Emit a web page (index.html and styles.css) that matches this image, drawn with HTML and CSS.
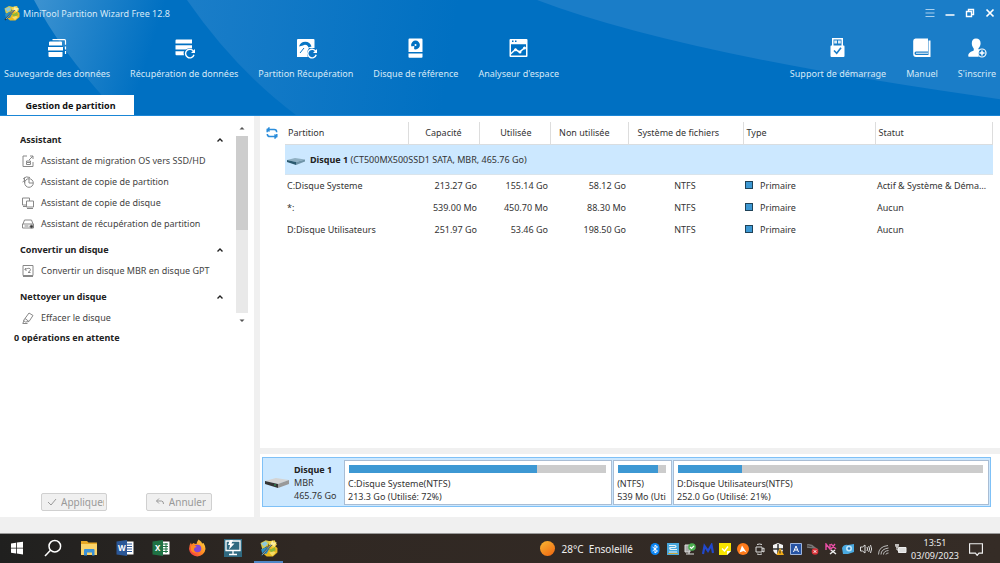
FILE: index.html
```html
<!DOCTYPE html>
<html lang="fr">
<head>
  <meta charset="utf-8">
  <title>MiniTool Partition Wizard Free 12.8</title>
  <link rel="stylesheet" href="styles.css">
</head>
<body>
  <svg class="defs" width="0" height="0" aria-hidden="true">
    <symbol id="logo" viewBox="0 0 16 16">
      <path d="M7 6l5-1 3.500 3v4l-4 3.500H6L3 13z" fill="#e9b820"/>
      <path d="M.5 3.500L5 1l4 1-2 4-5 3z" fill="#d8c84a"/>
      <path d="M1 4l4-2 2 2-3 3z" fill="#8cc9dc"/>
      <path d="M8 2l5-1 2 4-3 3-4-2z" fill="#f4d548"/>
      <path d="M1 9l5-2 2 2-2 4-4 0z" fill="#2d8fc4"/>
      <path d="M7 8l3 1 3-2 1 3-4 2z" fill="#8db73a"/>
      <path d="M8 12l4-1 2 1-3 3z" fill="#f7dc66"/>
      <path d="M1 15L12 3" stroke="#243b4a" stroke-width="1.6"/>
      <path d="M2 14L12 3" stroke="#d9e7ec" stroke-width=".6"/>
      <path d="M11 1l1 2 3 0-2 2 0 2-2-2-2 0 1-2z" fill="#fff0a0"/>
    </symbol>
    <symbol id="chevron" viewBox="0 0 8 8">
      <path d="M1.500 5.500L4 3l2.500 2.500" fill="none" stroke="#222" stroke-width="1.400"/>
    </symbol>
  </svg>

  <header class="header">
    <svg class="header-bg" viewBox="0 0 1000 116" preserveAspectRatio="none" aria-hidden="true">
      <defs>
        <linearGradient id="g1" gradientUnits="userSpaceOnUse" x1="40" y1="0" x2="155" y2="36">
          <stop offset="0" stop-color="#3a91d0"/>
          <stop offset="1" stop-color="#0070c2"/>
        </linearGradient>
        <linearGradient id="g2" gradientUnits="userSpaceOnUse" x1="190" y1="20" x2="450" y2="60">
          <stop offset="0" stop-color="#1a7dc8"/>
          <stop offset="1" stop-color="#0070c2"/>
        </linearGradient>
      </defs>
      <path d="M34 0Q60 50 108 103L115 116H296Q235 70 187 0z" fill="url(#g1)"/>
      <path d="M187 0Q235 70 296 116H537V0z" fill="url(#g2)"/>
      <path d="M537 0Q680 55 1000 100V0z" fill="#1a7dc8"/>
    </svg>

    <div class="titlebar">
      <svg class="logo"><use href="#logo"/></svg>
      <h1 class="title">MiniTool Partition Wizard Free 12.8</h1>
      <div class="window-buttons">
        <button class="window-button" aria-label="Menu">
          <svg viewBox="0 0 10 10"><path d="M.5 1.500h9M.5 5h9M.5 8.500h9" stroke="#a9d0ee"/></svg>
        </button>
        <button class="window-button" aria-label="Réduire">
          <svg viewBox="0 0 10 10"><path d="M.5 7h9" stroke="#fff" stroke-width="1.500"/></svg>
        </button>
        <button class="window-button" aria-label="Restaurer">
          <svg viewBox="0 0 10 10" fill="none" stroke="#fff" stroke-width="1.400"><path d="M1.500 3.500h5v5h-5zM3.500 3V1.500h5v5H7"/></svg>
        </button>
        <button class="window-button" aria-label="Fermer">
          <svg viewBox="0 0 10 10"><path d="M1.500 1.500l7 7m0-7l-7 7" stroke="#fff" stroke-width="1.700"/></svg>
        </button>
      </div>
    </div>

    <nav class="toolbar">
      <button class="tool">
        <svg viewBox="0 0 22 22" fill="#fff">
          <path d="M3 5.500q0-1 1-1h11q1 0 1 1V8.500H3zM2 10h15v3.500H2zM2.500 15H16.500V19q0 1-1 1H3.500q-1 0-1-1z"/>
          <path d="M6.500 2.700h12q1 0 1 1v4M19.500 9.500v3M19.500 14v3" fill="none" stroke="#fff" stroke-width="1.200"/>
        </svg>
        Sauvegarde des données
      </button>
      <button class="tool">
        <svg viewBox="0 0 22 22" fill="#fff">
          <path d="M2.500 3.500q0-1 1-1H19v4H2.500zM2.500 8.300H19v3.200q-3-1.500-6 1H2.500zM2.500 14.300H11q-1 2 0 4H3.500q-1 0-1-1z"/>
          <path d="M20.800 14.800a4.300 4.300 0 1 0 .2 3" fill="none" stroke="#fff" stroke-width="1.400"/>
          <path d="M22 12v4h-4z"/>
        </svg>
        Récupération de données
      </button>
      <button class="tool">
        <svg viewBox="0 0 22 22" fill="#fff">
          <path d="M2 3q0-1 1-1h15.500q1 0 1 1v17H2z"/>
          <path d="M4 9.500a6.500 6.500 0 0 1 12.500 0l-3 1A3.500 3.500 0 0 0 8 8.500z" fill="#0876c5"/>
          <circle cx="10.500" cy="9.500" r="1.500"/>
          <path d="M9 11l-4 5" stroke="#0876c5"/>
          <path d="M14 11h8v11h-8q-4-5 0-11z" fill="#0c74c4"/>
          <path d="M21 14.800a4.300 4.300 0 1 0 .2 3" fill="none" stroke="#fff" stroke-width="1.400"/>
          <path d="M22 12v4h-4z"/>
        </svg>
        Partition Récupération
      </button>
      <button class="tool">
        <svg viewBox="0 0 22 22" fill="#fff">
          <path d="M4.500 1.500h12q1 0 1 1V15h-14V2.500q0-1 1-1zM3.500 16.500h14V20q0 .7-1 .7h-12q-1 0-1-.7z"/>
          <circle cx="10.500" cy="8" r="4.400" fill="#0070c2"/>
          <path d="M5.500 9.500l3.800-.5-.3 4.500H5.500z"/>
          <circle cx="10.500" cy="8" r="1"/>
        </svg>
        Disque de référence
      </button>
      <button class="tool">
        <svg viewBox="0 0 22 22" fill="#fff">
          <path d="M2.500 2h16q1 0 1 1v16q0 1-1 1h-16q-1 0-1-1V3q0-1 1-1zM3 7.300v11.200h15V7.300z" fill-rule="evenodd"/>
          <path d="M4 4.300h1.500M7 4.300h1.500" stroke="#0070c2" stroke-width="1.500"/>
          <path d="M2.500 17l5-4.500 4 2.500 5.500-4.500" fill="none" stroke="#fff" stroke-width="1.500"/>
          <circle cx="7.500" cy="12.800" r="1.500"/><circle cx="12" cy="15" r="1.500"/><circle cx="16.500" cy="11" r="1.500"/>
        </svg>
        Analyseur d'espace
      </button>
      <button class="tool tool-right">
        <svg viewBox="0 0 22 22" fill="#fff">
          <path d="M5 1h11v7.500h.8q.7 0 .7 1V19q0 1-1 1H4.500q-1 0-1-1V9.500q0-1 .7-1H5zM6.500 2.500v6h8v-6z" fill-rule="evenodd"/>
          <path d="M7.200 3.500H10v3H7.200zM11 3.500h2.800v3H11z" opacity=".85"/>
          <path d="M7 13.500l2.700 2.800 4.300-5.500" fill="none" stroke="#1a7dc8" stroke-width="1.600"/>
        </svg>
        Support de démarrage
      </button>
      <button class="tool">
        <svg viewBox="0 0 22 22" fill="#fff">
          <path d="M4.500 1.500H17V14.500H5q-1.500 0-1.500 1.700T5 18h12.500V3.500h2V20H5q-2.800 0-2.800-3V4q0-2.500 2.300-2.500z"/>
          <path d="M5 15.700h12v1H5z"/>
        </svg>
        Manuel
      </button>
      <button class="tool">
        <svg viewBox="0 0 22 22" fill="#fff">
          <path d="M10 1.500c3 0 4.600 2 4.600 4.800 0 2.400-1.100 4-2.200 5 .1 1 .5 1.700 1.400 2.100-2 1.400-2.200 4-1 6.300H2.500c-.9-3 1-4.600 5-6 .4-.6.4-1.400.2-2.300C6.500 10 5.800 8.500 5.800 6.300 5.800 3.500 7.300 1.500 10 1.500z"/>
          <circle cx="16" cy="16" r="4" fill="none" stroke="#fff" stroke-width="1.200"/>
          <path d="M16 13.500v5M13.500 16h5" stroke="#fff" stroke-width="1.500"/>
        </svg>
        S'inscrire
      </button>
    </nav>

    <div class="tabs">
      <button class="tab">Gestion de partition</button>
    </div>
  </header>

  <main class="content">
    <aside class="sidebar">
      <div class="menu">
        <div class="menu-list">
          <section class="group">
            <h2 class="group-title">Assistant <svg class="chevron"><use href="#chevron"/></svg></h2>
            <a class="item" href="#">
              <svg viewBox="0 0 12 12"><path d="M5 1H1v10.500h10V7M8 1h3v3M11 1L7 5M4.500 7.500h4v2h-4zM4.500 7.500V6h4v1.500"/></svg>
              Assistant de migration OS vers SSD/HD
            </a>
            <a class="item" href="#">
              <svg viewBox="0 0 12 12"><circle cx="7" cy="7" r="4.300"/><path d="M7 3v4h4M2.500 7V1.500M2.500 4.500L.5 6M1 3q3-3.500 7-1.500"/></svg>
              Assistant de copie de partition
            </a>
            <a class="item" href="#">
              <svg viewBox="0 0 12 12"><path d="M4 8H.500V1h7v3M4.500 4h7v6h-7zM5 11.500h6M1 9.500h3"/></svg>
              Assistant de copie de disque
            </a>
            <a class="item" href="#">
              <svg viewBox="0 0 12 12"><path d="M1 6l1.500-4h7L11 6M.500 6h11v4H.500zM2.500 8h4"/><circle cx="9.500" cy="8.500" r="1.600" fill="#333"/></svg>
              Assistant de récupération de partition
            </a>
          </section>
          <section class="group">
            <h2 class="group-title">Convertir un disque <svg class="chevron"><use href="#chevron"/></svg></h2>
            <a class="item" href="#">
              <svg viewBox="0 0 12 12"><path d="M1 .500h10v10H1zM1 11.500h10M4 3L2.700 4.500 4.500 5.500M3 4.500q5-2.500 5.500 0 0 1.500-2.500 3h2.500"/></svg>
              Convertir un disque MBR en disque GPT
            </a>
          </section>
          <section class="group">
            <h2 class="group-title">Nettoyer un disque <svg class="chevron"><use href="#chevron"/></svg></h2>
            <a class="item" href="#">
              <svg viewBox="0 0 12 12"><path d="M7 1l4 2.500-4 6-3.500.5L1.500 8.500zM3 6.500l4 3M.500 11.500h5M2 8.500l-1 2.500"/></svg>
              Effacer le disque
            </a>
          </section>
        </div>
        <div class="scrollbar" aria-hidden="true">
          <svg viewBox="0 0 8 8"><path d="M1.500 5.500L4 3l2.500 2.500z"/></svg>
          <div class="scroll-track"><div class="scroll-thumb"></div></div>
          <svg viewBox="0 0 8 8"><path d="M1.500 2.500L4 5l2.500-2.500z"/></svg>
        </div>
      </div>
      <p class="pending">0 opérations en attente</p>
      <div class="actions">
        <button class="action" disabled>
          <svg viewBox="0 0 10 10"><path d="M1 5l3 3 5-6"/></svg>
          <span>Appliquer</span>
        </button>
        <button class="action" disabled>
          <svg viewBox="0 0 10 10"><path d="M4 1.500L1.500 4 4 6.500M1.500 4h5q2 0 2 3"/></svg>
          <span>Annuler</span>
        </button>
      </div>
    </aside>

    <div class="panel">
      <div class="partitions">
        <button class="refresh" aria-label="Actualiser">
          <svg viewBox="0 0 12 12" fill="none" stroke="#2b8ddb" stroke-width="1.500"><path d="M1.200 5.200V2.500h7q2.500 0 2.500 2.700M10.800 7v2.500h-7Q1.300 9.500 1.300 7M3.500.500l-2 2 2 2M8.500 7.500l2 2-2 2"/></svg>
        </button>
        <table class="table">
          <colgroup>
            <col class="col-name"><col class="col-size"><col class="col-size"><col class="col-free"><col class="col-fs"><col class="col-type"><col>
          </colgroup>
          <thead>
            <tr>
              <th>Partition</th>
              <th class="center">Capacité</th>
              <th class="right">Utilisée</th>
              <th class="right">Non utilisée</th>
              <th>Système de fichiers</th>
              <th>Type</th>
              <th>Statut</th>
            </tr>
          </thead>
          <tbody>
            <tr class="disk-row">
              <td colspan="7">
                <svg class="disk-icon" viewBox="0 0 18 8"><path d="M0 3l8-2 10 1.500L9 5z" fill="#8fb0c3"/><path d="M0 3l9 2v3L0 5z" fill="#2b5a70"/><path d="M9 5l9-2.500v2L9 8z" fill="#7095a9"/></svg><b>Disque 1</b> (CT500MX500SSD1 SATA, MBR, 465.76 Go)
              </td>
            </tr>
            <tr>
              <td>C:Disque Systeme</td>
              <td class="right">213.27 Go</td>
              <td class="right">155.14 Go</td>
              <td class="right">58.12 Go</td>
              <td class="center">NTFS</td>
              <td class="type">Primaire</td>
              <td>Actif &amp; Système &amp; Démarrage</td>
            </tr>
            <tr>
              <td>*:</td>
              <td class="right">539.00 Mo</td>
              <td class="right">450.70 Mo</td>
              <td class="right">88.30 Mo</td>
              <td class="center">NTFS</td>
              <td class="type">Primaire</td>
              <td>Aucun</td>
            </tr>
            <tr>
              <td>D:Disque Utilisateurs</td>
              <td class="right">251.97 Go</td>
              <td class="right">53.46 Go</td>
              <td class="right">198.50 Go</td>
              <td class="center">NTFS</td>
              <td class="type">Primaire</td>
              <td>Aucun</td>
            </tr>
          </tbody>
        </table>
      </div>

      <div class="map-area">
        <div class="map">
          <div class="map-disk">
            <svg viewBox="0 0 24 10"><path d="M0 3l11-3 13 2-11 4z" fill="#d4d4d4"/><path d="M0 3l13 3v4L0 6z" fill="#353535"/><path d="M13 6l11-4v4l-11 4z" fill="#999"/><path d="M9 7h2" stroke="#2fa35a"/></svg>
            <div><b>Disque 1</b><br>MBR<br>465.76 Go</div>
          </div>
          <div class="part part-c">
            <div class="bar"><div class="bar-used" style="width: 73%"></div></div>
            C:Disque Systeme(NTFS)<br>213.3 Go (Utilisé: 72%)
          </div>
          <div class="part part-small">
            <div class="bar"><div class="bar-used" style="width: 84%"></div></div>
            (NTFS)<br>539 Mo (Uti
          </div>
          <div class="part part-d">
            <div class="bar"><div class="bar-used" style="width: 21%"></div></div>
            D:Disque Utilisateurs(NTFS)<br>252.0 Go (Utilisé: 21%)
          </div>
        </div>
      </div>
    </div>
  </main>

  <div class="statusbar"></div>

  <footer class="taskbar">
    <div class="apps">
      <button class="app" aria-label="Démarrer">
        <svg viewBox="0 0 18 18" fill="#fff"><path d="M3 4.500l5-.8v5H3zM8.800 3.600L15 2.700v6H8.800zM3 9.500h5v5l-5-.8zM8.800 9.500H15v6l-6.200-.9z"/></svg>
      </button>
      <button class="app" aria-label="Rechercher">
        <svg viewBox="0 0 18 18" fill="none" stroke="#fff" stroke-width="1.500"><circle cx="10.800" cy="7.200" r="5.800"/><path d="M6.500 11.300L1 17"/></svg>
      </button>
      <button class="app" aria-label="Explorateur de fichiers">
        <svg viewBox="0 0 18 18"><path d="M1 2h6l1.500 1.500H17V16H1z" fill="#e8a825"/><path d="M1 5h16v11H1z" fill="#fbd46a"/><path d="M4 16.500V11q0-1 1-1h8.500q1 0 1 1v5.500H12v-3H7v3z" fill="#3b91d8"/></svg>
      </button>
      <button class="app" aria-label="Word">
        <svg viewBox="0 0 18 18"><path d="M9 2.500h8.500v13H9z" fill="#fff"/><path d="M11 5h5M11 7.500h5M11 10h5M11 12.500h5" stroke="#2b5797"/><path d="M.500 2.500L11 1v16L.500 15.500z" fill="#2b5797"/><text class="glyph" x="2" y="12">W</text></svg>
      </button>
      <button class="app" aria-label="Excel">
        <svg viewBox="0 0 18 18"><path d="M9 2.500h8.500v13H9z" fill="#fff"/><path d="M11 5h5M11 7.500h5M11 10h5M11 12.500h5M14 4v10" stroke="#1f7244"/><path d="M.500 2.500L11 1v16L.500 15.500z" fill="#1f7244"/><text class="glyph" x="3" y="12">X</text></svg>
      </button>
      <button class="app" aria-label="Firefox">
        <svg viewBox="0 0 18 18"><defs><linearGradient id="ff" x1="1" y1="0" x2="0" y2="1"><stop offset="0" stop-color="#ffe047"/><stop offset=".5" stop-color="#ff8a22"/><stop offset="1" stop-color="#f0264f"/></linearGradient></defs><path d="M10.500.5q3 2 3.500 4l1.500-.5q2 3 2 6a8.300 8.300 0 0 1-16.500 0Q1 6 3 3.500l.5 2L5.500 4q1 1 3 1 .5-2.500 2-4.500z" fill="url(#ff)"/><circle cx="9.500" cy="9.500" r="3.800" fill="#8147d8"/><path d="M3 7q4-1 6 1-3 0-3 2.500T9 13.500q-4 1-6-2z" fill="#ff8a22"/></svg>
      </button>
      <button class="app" aria-label="Bureau à distance">
        <svg viewBox="0 0 18 18"><path d="M0 0h18v18H0z" fill="#2f6980"/><path d="M2 2h14v9.500H2zM9 11.500V15M5 15.500h8" fill="none" stroke="#fff" stroke-width="1.300"/><path d="M6 1h3L7.500 4.500h3L5 10.500l1-4.500H4z" fill="#fff"/></svg>
      </button>
      <button class="app app-active" aria-label="MiniTool Partition Wizard">
        <svg><use href="#logo"/></svg>
      </button>
    </div>

    <div class="weather"><span class="sun"></span>28°C&nbsp; Ensoleillé</div>

    <div class="tray">
      <svg viewBox="0 0 12 12"><rect x="1.500" width="9" height="12" rx="4.500" fill="#0a84f2"/><path d="M3.500 4l5 4L6 10V2l2.500 2-5 4" fill="none" stroke="#fff"/></svg>
      <svg viewBox="0 0 12 12"><path d="M0 0h12v12H0z" fill="#49a7dc"/><path d="M2 2.500h6q2 1 0 2H3q-1 2 2 2h5M2 9h8" fill="none" stroke="#e6f4fb" stroke-width="1.200"/><path d="M1 10.500h10" stroke="#c7a63a"/></svg>
      <svg viewBox="0 0 12 12"><path d="M1 2h5v7H1zM2 11h8M5 9v2" fill="#aaa" stroke="#ddd"/><circle cx="8" cy="4" r="3.800" fill="#4caf50"/><path d="M6 4l1.500 1.500L10 3" fill="none" stroke="#fff" stroke-width="1.200"/></svg>
      <svg viewBox="0 0 12 12"><path d="M1 11L2.500 3 6 8l3.500-6L11 10" fill="none" stroke="#2148cc" stroke-width="2.200"/></svg>
      <svg viewBox="0 0 12 12"><path d="M0 0h12v8l-4 4H0z" fill="#f6e400"/><path d="M8 12V8h4z" fill="#fff"/><path d="M3 5.500l2.500 2.500L9 3.500" fill="none" stroke="#fff" stroke-width="1.300"/></svg>
      <svg viewBox="0 0 12 12"><circle cx="6" cy="6" r="6" fill="#ff7a1a"/><path d="M2.500 9.500L5 2.500l4.500 7-3-1.500z" fill="#fff"/></svg>
      <svg viewBox="0 0 12 12" fill="none" stroke="#ddd"><path d="M2 4h6v5H2zM8 6l2-1v4L8 8M3 1.500q2.500-1 5 0M3 11q2.500 1 5 0"/></svg>
      <svg viewBox="0 0 12 12"><path d="M6 0l5 2v4q0 4-5 6-5-2-5-6V2z" fill="#f4f4f4"/><path d="M6 1v10M1 6h10" stroke="#333" stroke-width="1.500"/><path d="M8 5l4 7H4.500z" fill="#f5ad16"/><path d="M8 7.500v3" stroke="#222"/></svg>
      <svg viewBox="0 0 12 12"><path d="M.500.500h11v11H.500z" fill="#2754a4" stroke="#9fb5dc"/><path d="M3.500 9L6 3l2.500 6M4.500 7h3" fill="none" stroke="#fff"/></svg>
      <svg viewBox="0 0 12 12"><path d="M0 2q4-1 8 3M0 4l8 1 3 2" fill="none" stroke="#777" stroke-width="1.600"/><circle cx="8" cy="8.500" r="3.300" fill="#d93238"/><path d="M6.700 7.200l2.600 2.600m0-2.600L6.700 9.800" stroke="#fff"/></svg>
      <svg viewBox="0 0 12 12"><path d="M1 7V1l4 5V1M6 1l5 5M10 1L6 6" fill="none" stroke="#e94fa5" stroke-width="1.400"/><path d="M5 11l5-4M6 7l5 4" stroke="#eee" stroke-width="1.500"/></svg>
      <svg viewBox="0 0 12 12"><path d="M0 5q2-4 6-3l6-1v8l-6 2H1z" fill="#4aa9e0"/><circle cx="7" cy="5.500" r="3" fill="#bfe6fa"/><circle cx="7" cy="5.500" r="1.300" fill="#2277bc"/></svg>
      <svg viewBox="0 0 12 12" fill="none" stroke="#ddd"><path d="M.500 4h2L5 2v8L2.500 8h-2zM7 4q1 2 0 4M8.700 3q1.800 3 0 6M10.500 2q2.200 4 0 8"/></svg>
      <svg viewBox="0 0 12 12" fill="none" stroke="#bbb"><path d="M1.500 11.500q0-8 9.500-9M4 11.500q0-5.500 7.500-6.500M6.500 11.500q0-3.500 5-4"/><path d="M9 11.500q0-1.500 2.500-1.500"/></svg>
      <svg viewBox="0 0 12 12"><path d="M3.500 4.500H11v5H3.500z" fill="#ddd" stroke="#eee"/><path d="M0 2h4M1 1v3h2V1M2 4v3h3" fill="none" stroke="#eee"/></svg>
    </div>

    <div class="clock">13:51<br>03/09/2023</div>
    <button class="notifications" aria-label="Notifications">
      <svg viewBox="0 0 12 12" fill="none" stroke="#eee"><path d="M.500 1.500h11v8h-3L7 11.500l-1.500-2h-5z"/></svg>
    </button>
  </footer>
</body>
</html>
```
FILE: styles.css
```css
* {
  box-sizing: border-box;
}
body {
  margin: 0;
  min-height: 100vh;
  display: flex;
  flex-direction: column;
  font-family: "Noto Sans", "Open Sans", sans-serif;
  font-size: 9px;
  color: #333;
  background: #fff;
}
button {
  font: inherit;
  color: inherit;
  background: none;
  border: none;
  padding: 0;
}
svg {
  display: block;
  flex-shrink: 0;
}
.defs {
  position: absolute;
}

/* Header */
.header {
  position: relative;
  background: #0070c2;
  color: #d6e9f7;
  border-bottom: 1px solid #1a86d6;
}
.header-bg {
  position: absolute;
  width: 100%;
  height: 100%;
}
.titlebar,
.toolbar,
.tabs {
  position: relative;
  display: flex;
}
.titlebar {
  height: 26px;
  align-items: center;
  padding: 0 5px 0 4px;
}
.logo {
  width: 16px;
  height: 16px;
}
.title {
  margin: 0 auto 0 3px;
  font-size: 9px;
  font-weight: normal;
}
.window-buttons {
  display: flex;
  gap: 10px;
}
.window-button svg {
  width: 10px;
  height: 10px;
}
.toolbar {
  gap: 20px;
  height: 69px;
  padding: 11px 4px 0;
  align-items: flex-start;
}
.tool {
  display: flex;
  flex-direction: column;
  align-items: center;
  gap: 8px;
  line-height: 14px;
  white-space: nowrap;
}
.tool svg {
  width: 22px;
  height: 22px;
}
.tool-right {
  margin-left: auto;
}
.tabs {
  padding-left: 7px;
}
.tab {
  width: 127px;
  height: 20px;
  background: #fff;
  color: #111;
  font-weight: bold;
}

/* Content */
.content {
  flex: 1;
  display: flex;
}
.sidebar {
  width: 260px;
  display: flex;
  flex-direction: column;
  border-right: 6px solid #f0f0f0;
}
.menu {
  display: flex;
  height: 210px;
  padding: 7px 6px 0 20px;
}
.menu-list {
  flex: 1;
  padding-top: 6px;
  overflow: hidden;
}
.group {
  margin-bottom: 5px;
}
.group-title {
  display: flex;
  align-items: center;
  justify-content: space-between;
  height: 21px;
  margin: 0;
  padding-right: 12px;
  font-size: 9px;
  color: #222;
}
.chevron {
  width: 8px;
  height: 8px;
}
.item {
  display: flex;
  align-items: center;
  gap: 7px;
  height: 21px;
  padding-left: 2px;
  color: #444;
  text-decoration: none;
  white-space: nowrap;
}
.item svg {
  width: 12px;
  height: 12px;
  fill: none;
  stroke: #888;
}
.scrollbar {
  width: 12px;
  display: flex;
  flex-direction: column;
  align-items: center;
  gap: 3px;
}
.scrollbar svg {
  width: 8px;
  height: 10px;
  fill: #555;
}
.scroll-track {
  flex: 1;
  width: 100%;
  background: #e9e9e9;
}
.scroll-thumb {
  height: 53%;
  background: #cdcdcd;
}
.pending {
  margin: 5px 14px;
  line-height: 14px;
  font-weight: bold;
  color: #222;
}
.actions {
  display: flex;
  gap: 39px;
  margin-top: auto;
  padding: 0 41px 6px;
}
.action {
  display: flex;
  align-items: center;
  justify-content: center;
  gap: 4px;
  width: 66px;
  height: 18px;
  padding: 0 2px 0 5px;
  font-size: 10px;
  color: #999;
  background: #f0f0f0;
  border: 1px solid #d0d0d0;
  border-radius: 2px;
}
.action span {
  overflow: hidden;
}
.action svg {
  width: 10px;
  height: 10px;
  fill: none;
  stroke: #999;
}

/* Partition list */
.panel {
  flex: 1;
  min-width: 0;
  display: flex;
  flex-direction: column;
}
.partitions {
  flex: 1;
  display: flex;
  align-items: flex-start;
  padding: 6px 7px 0 0;
}
.refresh {
  width: 25px;
  height: 22px;
  padding-left: 6px;
}
.refresh svg {
  width: 12px;
  height: 12px;
}
.table {
  flex: 1;
  width: 0;
  table-layout: fixed;
  border-collapse: collapse;
}
.col-name {
  width: 123px;
}
.col-size {
  width: 71px;
}
.col-free {
  width: 78px;
}
.col-fs {
  width: 115px;
}
.col-type {
  width: 132px;
}
th,
td {
  height: 22px;
  padding: 0 3px 0 2px;
  text-align: left;
  white-space: nowrap;
  overflow: hidden;
  text-overflow: ellipsis;
}
th {
  padding-left: 3px;
  font-weight: normal;
  border-right: 1px solid #ddd;
}
th:nth-child(5) {
  padding-left: 9px;
}
th.right {
  padding-right: 18px;
}
.center {
  text-align: center;
}
.right {
  text-align: right;
  padding-right: 2px;
}
.disk-row td {
  height: 30px;
  background: #cce8ff;
  border-top: 1px solid #d9dde0;
  border-bottom: 1px solid #d9e4ec;
}
.disk-icon {
  display: inline-block;
  width: 18px;
  height: 8px;
  margin-right: 5px;
  vertical-align: -2px;
}
.disk-row b,
.map-disk b {
  color: #222;
}
.type::before {
  content: "";
  display: inline-block;
  width: 6px;
  height: 6px;
  margin-right: 7px;
  background: #3d98d3;
  border: 1px solid #1f4258;
}

/* Disk map */
.map-area {
  padding: 3px 9px 10px 2px;
  border-top: 6px solid #f0f0f0;
}
.map {
  display: flex;
  gap: 1px;
  height: 50px;
  padding: 2px 1px 1px;
  line-height: 13px;
  background: #cce8ff;
  border: 1px solid #7fc1f7;
}
.map-disk {
  display: flex;
  align-items: center;
  gap: 5px;
  width: 79px;
  padding-left: 1px;
  white-space: nowrap;
}
.map-disk svg {
  width: 24px;
  height: 10px;
}
.part {
  min-width: 0;
  padding: 4px 4px 0 3px;
  overflow: hidden;
  white-space: nowrap;
  background: #fff;
  border: 1px solid #a9bdd4;
}
.part-c {
  flex: 260 1 0;
}
.part-small {
  flex: 50 1 0;
}
.part-d {
  flex: 308 1 0;
}
.bar {
  height: 8px;
  margin: 0 1px 4px;
  background: #ccc;
}
.bar-used {
  height: 100%;
  background: #3d98d3;
}
.statusbar {
  height: 17px;
  background: #f0f0f0;
  border-bottom: 1px solid #999;
}

/* Taskbar */
.taskbar {
  display: flex;
  align-items: center;
  height: 29px;
  background: linear-gradient(90deg, #20201f, #302823 30%, #352c26);
  color: #eee;
}
.apps {
  display: flex;
  align-self: stretch;
  gap: 7px;
  padding-left: 2px;
}
.app {
  display: flex;
  align-items: center;
  justify-content: center;
  width: 29px;
  border-bottom: 2px solid transparent;
}
.app-active {
  border-color: #4f87c7;
}
.app svg {
  width: 18px;
  height: 18px;
}
.glyph {
  font-size: 8px;
  font-weight: bold;
  fill: #fff;
}
.weather {
  display: flex;
  align-items: center;
  margin-left: auto;
  margin-right: 16px;
  font-size: 10px;
}
.sun {
  width: 15px;
  height: 15px;
  margin-right: 7px;
  border-radius: 50%;
  background: linear-gradient(145deg, #f7b733, #ef6410);
}
.tray {
  display: flex;
  justify-content: space-between;
  width: 258px;
}
.tray svg {
  width: 12px;
  height: 12px;
}
.clock {
  width: 56px;
  line-height: 13px;
  text-align: center;
}
.notifications {
  width: 14px;
  margin: 0 17px 0 6px;
}
.notifications svg {
  width: 14px;
  height: 14px;
}
```
